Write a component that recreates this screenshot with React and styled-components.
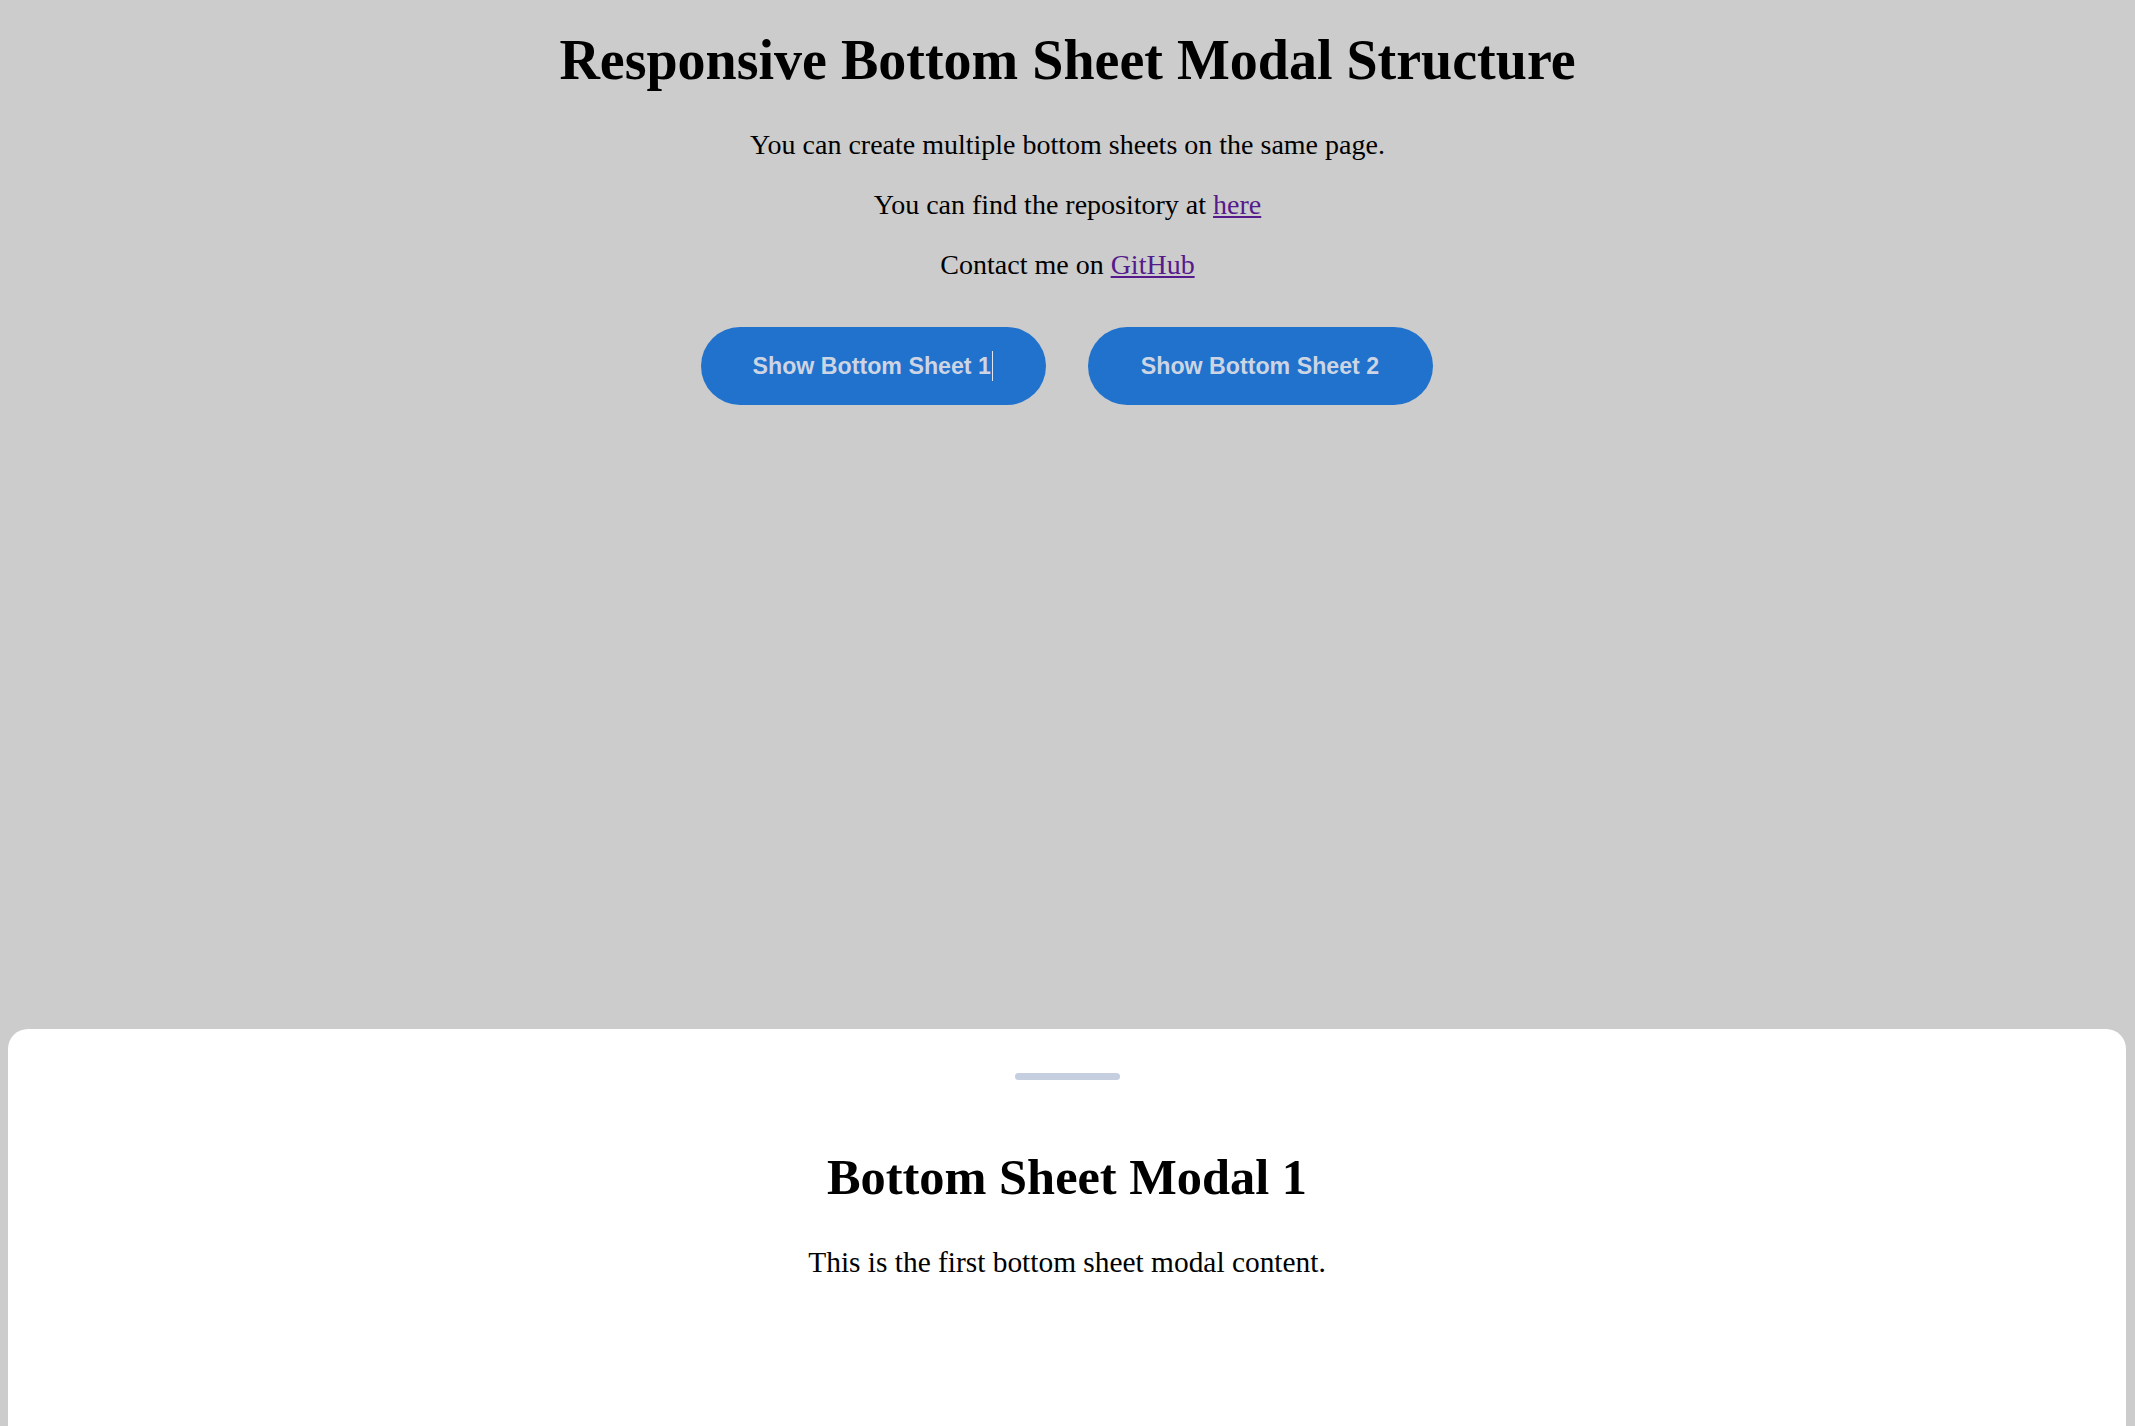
import React from 'react';
import styled, { createGlobalStyle } from 'styled-components';

const GlobalStyle = createGlobalStyle`
  html, body {
    margin: 0;
    padding: 0;
    background: #cccccc;
  }
  body {
    font-family: "Liberation Serif", "Times New Roman", serif;
    color: #000;
  }
`;

const Page = styled.div`
  height: 100vh;
  display: flex;
  flex-direction: column;
  overflow: hidden;
`;

const Intro = styled.main`
  display: flex;
  flex-direction: column;
  align-items: center;
  padding-top: 30px;
  text-align: center;
`;

const Title = styled.h1`
  margin: 0 0 38px;
  font-size: 56px;
  line-height: 61px;
  font-weight: 700;
`;

const Text = styled.p`
  margin: 0 0 28px;
  font-size: 28px;
  line-height: 32px;
  &:last-of-type {
    margin-bottom: 0;
  }
`;

const Link = styled.a`
  color: #551a8b;
  text-decoration: underline;
`;

const Actions = styled.div`
  display: flex;
  gap: 42px;
  margin-top: 46px;
  transform: translateX(-1px);
`;

const Button = styled.button`
  width: 345px;
  height: 78px;
  border: none;
  border-radius: 39px;
  background: #2072cd;
  color: #cdd5e4;
  font-family: "Liberation Sans", Arial, sans-serif;
  font-weight: 700;
  font-size: 23.2px;
  cursor: pointer;
  display: flex;
  align-items: center;
  justify-content: center;
`;

const Caret = styled.span`
  display: inline-block;
  width: 1.5px;
  height: 30px;
  margin-left: 1px;
  background: #dfe6f2;
`;

const Sheet = styled.section`
  margin: auto 9px 0 8px;
  height: 397px;
  background: #fff;
  border-radius: 20px 20px 0 0;
  display: flex;
  flex-direction: column;
  align-items: center;
  text-align: center;
  padding-top: 44px;
  box-sizing: border-box;
`;

const Handle = styled.div`
  width: 105px;
  height: 7px;
  border-radius: 4px;
  background: #c6cfe0;
`;

const SheetTitle = styled.h2`
  margin: 69px 0 39px;
  font-size: 50.4px;
  line-height: 57px;
  font-weight: 700;
`;

const SheetText = styled.p`
  margin: 0;
  font-size: 29.4px;
  line-height: 34px;
`;

export default function App() {
  return (
    <>
      <GlobalStyle />
      <Page>
        <Intro>
          <Title>Responsive Bottom Sheet Modal Structure</Title>
          <Text>You can create multiple bottom sheets on the same page.</Text>
          <Text>
            You can find the repository at <Link href="#">here</Link>
          </Text>
          <Text>
            Contact me on <Link href="#">GitHub</Link>
          </Text>
          <Actions>
            <Button>
              Show Bottom Sheet 1<Caret />
            </Button>
            <Button>Show Bottom Sheet 2</Button>
          </Actions>
        </Intro>
        <Sheet>
          <Handle />
          <SheetTitle>Bottom Sheet Modal 1</SheetTitle>
          <SheetText>This is the first bottom sheet modal content.</SheetText>
        </Sheet>
      </Page>
    </>
  );
}
